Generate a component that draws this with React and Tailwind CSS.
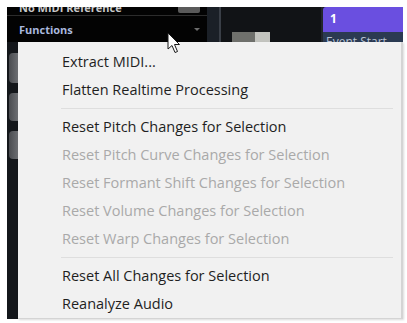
import React from "react";

const items = [
  { t: "Extract MIDI...", d: false },
  { t: "Flatten Realtime Processing", d: false },
  { sep: true },
  { t: "Reset Pitch Changes for Selection", d: false },
  { t: "Reset Pitch Curve Changes for Selection", d: true },
  { t: "Reset Formant Shift Changes for Selection", d: true },
  { t: "Reset Volume Changes for Selection", d: true },
  { t: "Reset Warp Changes for Selection", d: true },
  { sep: true },
  { t: "Reset All Changes for Selection", d: false },
  { t: "Reanalyze Audio", d: false },
];

export default function App() {
  return (
    <div className="w-[407px] h-[323px] bg-white overflow-hidden pt-[7px] pl-[7px]" style={{ fontFamily: '"Open Sans", "Noto Sans", sans-serif' }}>
      <div className="relative w-[396px] h-[312px] bg-[#14171b]">
        {/* top bar */}
        <div className="flex h-[35px]">
          <div className="w-[200px] bg-[#030303] flex flex-col">
            <div className="h-[9px] flex items-start justify-between pl-[12px] pr-[7px] overflow-hidden border-b border-[#2c2c2c]">
              <span className="text-[11px] font-bold text-[#c8c8c8] leading-none -translate-y-[5px]">No MIDI Reference</span>
              <span className="w-[22px] h-[6px] rounded-b-[2px] bg-[#5a5a5a]" />
            </div>
            <div className="flex-1 flex items-center justify-between pl-[12px] pr-[7px]">
              <span className="text-[11px] font-bold text-[#a9b8de] leading-none">Functions</span>
              <span className="w-0 h-0 border-l-[3px] border-r-[3px] border-t-[3px] border-l-transparent border-r-transparent border-t-[#6d6d6d]" />
            </div>
          </div>
          <div className="w-[14px] bg-[#1b2027] border-r-2 border-[#3a3f47]" />
          <div className="w-[100px] bg-[#111316] flex items-end pl-[11px]">
            <span className="w-[23px] h-[10px] bg-[#6f706c]" />
            <span className="w-[15px] h-[10px] bg-[#c3c4bf]" />
          </div>
          <div className="w-[2px] bg-[#22262c]" />
          <div className="flex-1 bg-[#6a4fe0] rounded-tl-[3px] flex flex-col">
            <div className="h-[25px] pl-[7px] pt-[6px] text-[12px] font-bold text-white leading-none">1</div>
            <div className="flex-1 bg-[#2b3a52] pl-[3px] overflow-hidden">
              <span className="block text-[12px] text-[#b9c3d4] leading-none translate-y-[4px]">Event Start</span>
            </div>
          </div>
        </div>
        {/* left strip */}
        <div className="flex flex-col gap-[10px] pt-[11px] pl-[2px] w-[11px]">
          <span className="h-[30px] rounded-l-[4px] bg-gradient-to-r from-[#4a4c50] to-[#6c6e72]" />
          <span className="h-[28px] rounded-l-[4px] bg-gradient-to-r from-[#4a4c50] to-[#6c6e72]" />
          <span className="h-[28px] rounded-l-[4px] bg-gradient-to-r from-[#4a4c50] to-[#6c6e72]" />
        </div>

        {/* menu */}
        <div className="absolute left-[11px] top-[35px] w-[385px] h-[277px] bg-[#f1f1f1] border-r-2 border-b border-[#d4d4d4] shadow-[1px_1px_2px_rgba(0,0,0,0.15)] pt-[6px]">
          {items.map((it, i) =>
            it.sep ? (
              <div key={i} className="h-[9px] flex items-center pl-[43px] pr-[8px]">
                <div className="h-px w-full bg-[#dedede]" />
              </div>
            ) : (
              <div key={i} className={`h-[28px] flex items-center pl-[44px] text-[14.5px] ${it.d ? "text-[#a9a9a9]" : "text-[#1f1f1f]"}`}>
                {it.t}
              </div>
            )
          )}
        </div>

        {/* cursor */}
        <svg className="absolute left-[160px] top-[25px]" width="14" height="22" viewBox="0 0 14 22">
          <path d="M1 1 L1 17 L5 13.5 L8 20.5 L10.5 19.5 L7.5 12.5 L12.5 12.5 Z" fill="#ffffff" stroke="#1a1a1a" strokeWidth="1" strokeLinejoin="round" />
        </svg>
      </div>
    </div>
  );
}
